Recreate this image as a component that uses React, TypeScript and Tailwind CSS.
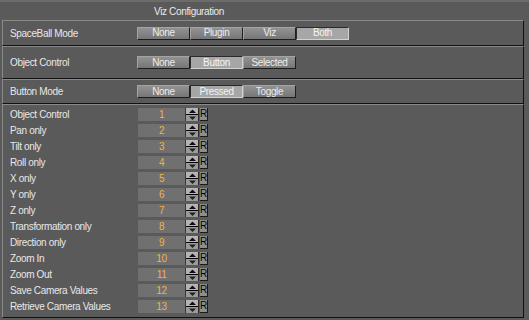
const font = { fontFamily: '"Liberation Sans", Arial, sans-serif' };

type Opt = { label: string; on?: boolean };

function ToggleGroup({ options }: { options: Opt[] }) {
  return (
    <div className="flex gap-0">
      {options.map((o) => (
        <div
          key={o.label}
          className={
            o.on
              ? 'w-[53px] h-[13px] flex items-center justify-center border border-t-[#2a2a2a] border-l-[#2a2a2a] border-b-[#d2d2d2] border-r-[#d2d2d2] bg-[#a6a6a6] text-[#f4f4f4]'
              : 'w-[53px] h-[13px] flex items-center justify-center border border-t-[#a4a4a4] border-l-[#a4a4a4] border-b-[#1e1e1e] border-r-[#1e1e1e] bg-gradient-to-b from-[#929292] to-[#767676] text-[#ececec]'
          }
        >
          <span className="leading-none">{o.label}</span>
        </div>
      ))}
    </div>
  );
}

function Spinner() {
  return (
    <svg width="13" height="13" viewBox="0 0 13 13" className="block">
      <rect x="0" y="0" width="13" height="6" fill="#b4b4b4" />
      <rect x="0" y="7" width="13" height="6" fill="#9a9a9a" />
      <rect x="0" y="6" width="13" height="1" fill="#000" />
      <polygon points="3,5 10,5 6.5,1.5" fill="#111" />
      <polygon points="3,8.5 10,8.5 6.5,12" fill="#222" />
      <rect x="12" y="0" width="1" height="13" fill="#2a2a2a" />
    </svg>
  );
}

const items = [
  'Object Control',
  'Pan only',
  'Tilt only',
  'Roll only',
  'X only',
  'Y only',
  'Z only',
  'Transformation only',
  'Direction only',
  'Zoom In',
  'Zoom Out',
  'Save Camera Values',
  'Retrieve Camera Values',
];

export default function App() {
  return (
    <div
      className="w-[529px] h-[320px] bg-[#5a5a5a] text-[10px] tracking-[-0.35px] text-[#e8e8e8] overflow-hidden"
      style={font}
    >
      {/* Title */}
      <div className="h-[2px] bg-[#6c6c6c]" />
      <div className="h-[18px] flex items-center pl-[154px] text-[#eaeaea]">Viz Configuration</div>

      <div className="ml-[2px] w-[522px] flex flex-col">
        {/* SpaceBall Mode */}
        <div className="h-[26px] flex items-center border border-t-[#8a8a8a] border-l-[#8a8a8a] border-b-[#111] border-r-[#111] pl-[7px]">
          <span className="w-[127px]">SpaceBall Mode</span>
          <ToggleGroup options={[{ label: 'None' }, { label: 'Plugin' }, { label: 'Viz' }, { label: 'Both', on: true }]} />
        </div>

        {/* Object Control */}
        <div className="h-[33px] flex items-center border border-t-[#8a8a8a] border-l-[#8a8a8a] border-b-[#111] border-r-[#111] pl-[7px]">
          <span className="w-[127px]">Object Control</span>
          <ToggleGroup options={[{ label: 'None' }, { label: 'Button', on: true }, { label: 'Selected' }]} />
        </div>

        {/* Button Mode */}
        <div className="h-[25px] flex items-center border border-t-[#8a8a8a] border-l-[#8a8a8a] border-b-[#111] border-r-[#111] pl-[7px]">
          <span className="w-[127px]">Button Mode</span>
          <ToggleGroup options={[{ label: 'None' }, { label: 'Pressed', on: true }, { label: 'Toggle' }]} />
        </div>

        {/* Key list */}
        <div className="h-[214px] flex flex-col border border-t-[#8a8a8a] border-l-[#8a8a8a] border-b-[#111] border-r-[#111] pl-[7px] pt-[1px]">
          {items.map((name, i) => (
            <div key={name} className="h-[16px] flex items-center">
              <span className="w-[128px]">{name}</span>
              <div className="w-[47px] h-[13px] bg-[#707070] flex items-center justify-center text-[#f2b04c]">
                {i + 1}
              </div>
              <div className="w-[1px] h-[13px] bg-[#3a3a3a]" />
              <Spinner />
              <div className="w-[8px] h-[13px] ml-[1px] bg-[#8e8e8e] border-r border-b border-[#1a1a1a] flex items-center justify-center text-black text-[10px] leading-none">
                R
              </div>
            </div>
          ))}
        </div>
      </div>
    </div>
  );
}
